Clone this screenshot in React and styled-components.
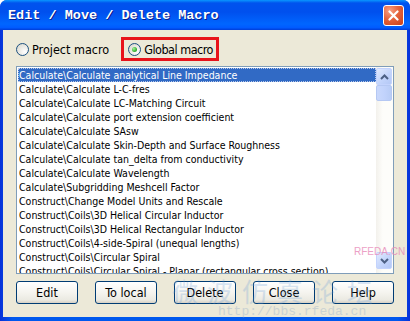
import React, { useState } from 'react';
import styled, { createGlobalStyle } from 'styled-components';

const GlobalStyle = createGlobalStyle`
  html, body {
    margin: 0;
    padding: 0;
    width: 410px;
    height: 321px;
    overflow: hidden;
    background: #ffffff;
  }
  * { box-sizing: border-box; }
`;

const uiFont = `"DejaVu Sans Condensed", "DejaVu Sans", sans-serif`;

const macros = [
  'Calculate\\Calculate analytical Line Impedance',
  'Calculate\\Calculate L-C-fres',
  'Calculate\\Calculate LC-Matching Circuit',
  'Calculate\\Calculate port extension coefficient',
  'Calculate\\Calculate SAsw',
  'Calculate\\Calculate Skin-Depth and Surface Roughness',
  'Calculate\\Calculate tan_delta from conductivity',
  'Calculate\\Calculate Wavelength',
  'Calculate\\Subgridding Meshcell Factor',
  'Construct\\Change Model Units and Rescale',
  'Construct\\Coils\\3D Helical Circular Inductor',
  'Construct\\Coils\\3D Helical Rectangular Inductor',
  'Construct\\Coils\\4-side-Spiral (unequal lengths)',
  'Construct\\Coils\\Circular Spiral',
  'Construct\\Coils\\Circular Spiral - Planar (rectangular cross section)',
];

const Window = styled.div`
  position: relative;
  width: 410px;
  height: 321px;
  display: flex;
  flex-direction: column;
  background: linear-gradient(90deg, #0831d9 0%, #0058ee 3%, #0058ee 97%, #0831d9 100%);
  border-radius: 7px 7px 0 0;
  overflow: hidden;
`;

const TitleBar = styled.div`
  height: 30px;
  flex: none;
  display: flex;
  align-items: center;
  justify-content: space-between;
  padding: 0 6px 0 8px;
  background: linear-gradient(180deg,
    #0997ff 0%, #0053ee 10%, #0050ee 40%, #0066ff 80%, #005bff 92%, #003dd7 100%);
`;

const Title = styled.span`
  font-family: "Liberation Mono", "DejaVu Sans Mono", monospace;
  font-weight: bold;
  font-size: 13.5px;
  color: #ffffff;
  text-shadow: 1px 1px 0 #0a1e8c;
`;

const CloseButton = styled.div`
  width: 21px;
  height: 21px;
  border: 1px solid #ffffff;
  border-radius: 3px;
  background: radial-gradient(circle at 30% 25%, #f7a084 0%, #e5633c 45%, #c93f18 100%);
  display: flex;
  align-items: center;
  justify-content: center;
`;

const Body = styled.div`
  flex: 1;
  margin: 0 3px 4px 3px;
  background: #ece9d8;
  padding: 7px 13px 0 13px;
  display: flex;
  flex-direction: column;
`;

const RadioRow = styled.div`
  height: 24px;
  display: flex;
  align-items: center;
`;

const RadioLabel = styled.label`
  display: flex;
  align-items: center;
  gap: 3px;
  font-family: ${uiFont};
  font-size: 12.5px;
  color: #000000;
  height: 24px;
  letter-spacing: ${p => p.$boxed ? '-0.5px' : '0'};
  padding: 0 ${p => p.$boxed ? '3px' : '0'} 0 ${p => p.$boxed ? '4px' : '0'};
  margin-left: ${p => p.$boxed ? '12px' : '0'};
  border: ${p => p.$boxed ? '3px solid #e8131b' : 'none'};
`;

const RadioCircle = styled.span`
  position: relative;
  width: 13px;
  height: 13px;
  border-radius: 50%;
  border: 1px solid #1c5180;
  background: radial-gradient(circle at 70% 70%, #ffffff 0%, #e6e5de 60%, #d0cfc7 100%);
  flex: none;
  &::after {
    content: '';
    display: ${p => p.$checked ? 'block' : 'none'};
    position: absolute;
    left: 3px;
    top: 3px;
    width: 5px;
    height: 5px;
    border-radius: 50%;
    background: radial-gradient(circle at 35% 35%, #a8f0a0 0%, #3fb83a 55%, #1f8a1c 100%);
  }
`;

const ListBox = styled.div`
  margin-top: 5px;
  height: 208px;
  border: 1px solid #7f9db9;
  background: #ffffff;
  display: flex;
  overflow: hidden;
`;

const Items = styled.div`
  flex: 1;
  padding: 1px 0 0 1px;
  overflow: hidden;
`;

const Item = styled.div`
  height: 14px;
  line-height: 14px;
  padding-left: 1px;
  font-family: ${uiFont};
  font-size: 10.5px;
  white-space: nowrap;
  color: ${p => p.$selected ? '#ffffff' : '#000000'};
  background: ${p => p.$selected ? '#316ac5' : 'transparent'};
  outline: ${p => p.$selected ? '1px dotted #b8c8e8' : 'none'};
  outline-offset: -1px;
`;

const ScrollBar = styled.div`
  width: 17px;
  flex: none;
  background: linear-gradient(90deg, #f3f1ec 0%, #fdfdfa 40%, #fdfdfa 100%);
  display: flex;
  flex-direction: column;
  padding: 1px 0 4px 0;
`;

const ScrollButton = styled.div`
  height: 17px;
  flex: none;
  margin: 0 1px 0 0;
  border: 1px solid #c3d3fd;
  border-radius: 2px;
  background: linear-gradient(135deg, #e1eafe 0%, #c1d3fb 60%, #b4c8f6 100%);
  display: flex;
  align-items: center;
  justify-content: center;
`;

const Thumb = styled.div`
  height: 16px;
  margin: 0 1px 0 0;
  border: 1px solid #b5c8f3;
  border-radius: 2px;
  background: linear-gradient(90deg, #c9d8fc 0%, #c2d3fc 50%, #b8ccf6 100%);
`;

const Track = styled.div`
  flex: 1;
`;

const ButtonRow = styled.div`
  margin-top: 7px;
  display: flex;
  justify-content: space-between;
`;

const Button = styled.button`
  width: 62px;
  height: 23px;
  padding: 0;
  border: 1px solid #003c74;
  border-radius: 3px;
  background: linear-gradient(180deg, #ffffff 0%, #f5f4ef 50%, #ebeae2 85%, #d6d0c5 100%);
  font-family: ${uiFont};
  font-size: 12.5px;
  color: #000000;
`;

const Watermark = styled.div`
  position: absolute;
  left: ${p => p.$x}px;
  top: ${p => p.$y}px;
  font-family: ${p => p.$family};
  font-size: ${p => p.$size}px;
  color: ${p => p.$color};
  opacity: ${p => p.$opacity};
  letter-spacing: ${p => p.$spacing || 0}px;
  white-space: nowrap;
  pointer-events: none;
`;

const Arrow = ({ up }) => (
  <svg width="9" height="6" viewBox="0 0 9 6">
    <path
      d={up ? 'M1 5 L4.5 1.5 L8 5' : 'M1 1 L4.5 4.5 L8 1'}
      fill="none"
      stroke="#4d6185"
      strokeWidth="2"
    />
  </svg>
);

export default function App() {
  const [scope, setScope] = useState('global');
  return (
    <>
      <GlobalStyle />
      <Window>
        <TitleBar>
          <Title>Edit / Move / Delete Macro</Title>
          <CloseButton>
            <svg width="11" height="11" viewBox="0 0 11 11">
              <path d="M1.5 1.5 L9.5 9.5 M9.5 1.5 L1.5 9.5" stroke="#ffffff" strokeWidth="2.2" strokeLinecap="round" />
            </svg>
          </CloseButton>
        </TitleBar>
        <Body>
          <RadioRow>
            <RadioLabel onClick={() => setScope('project')}>
              <RadioCircle $checked={scope === 'project'} />
              Project macro
            </RadioLabel>
            <RadioLabel $boxed onClick={() => setScope('global')}>
              <RadioCircle $checked={scope === 'global'} />
              Global macro
            </RadioLabel>
          </RadioRow>
          <ListBox>
            <Items>
              {macros.map((m, i) => (
                <Item key={m} $selected={i === 0}>{m}</Item>
              ))}
            </Items>
            <ScrollBar>
              <ScrollButton><Arrow up /></ScrollButton>
              <Thumb />
              <Track />
              <ScrollButton><Arrow /></ScrollButton>
            </ScrollBar>
          </ListBox>
          <ButtonRow>
            <Button>Edit</Button>
            <Button>To local</Button>
            <Button>Delete</Button>
            <Button>Close</Button>
            <Button>Help</Button>
          </ButtonRow>
        </Body>
        <Watermark $x={354} $y={246} $size={10} $family={'"Liberation Sans", sans-serif'} $color="#e88ab8" $opacity={0.8}>RFEDA.CN</Watermark>
        <Watermark $x={172} $y={272} $size={26} $family={'"Noto Sans CJK SC", sans-serif'} $color="#6a9ed8" $opacity={0.25} $spacing={9}>微波仿真论坛</Watermark>
        <Watermark $x={218} $y={304} $size={13} $family={'"Liberation Mono", monospace'} $color="#7f9fc6" $opacity={0.3}>http://bbs.rfeda.cn</Watermark>
      </Window>
    </>
  );
}
